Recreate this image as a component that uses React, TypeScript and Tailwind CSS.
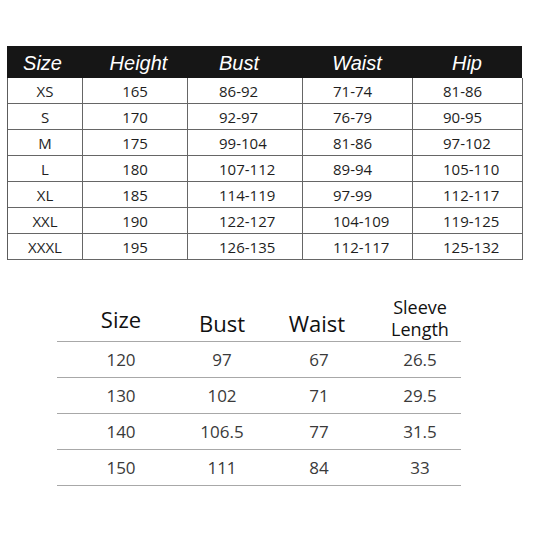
const TOP_HEAD = ["Size", "Height", "Bust", "Waist", "Hip"];

const TOP_ROWS = [
  ["XS", "165", "86-92", "71-74", "81-86"],
  ["S", "170", "92-97", "76-79", "90-95"],
  ["M", "175", "99-104", "81-86", "97-102"],
  ["L", "180", "107-112", "89-94", "105-110"],
  ["XL", "185", "114-119", "97-99", "112-117"],
  ["XXL", "190", "122-127", "104-109", "119-125"],
  ["XXXL", "195", "126-135", "112-117", "125-132"],
];

const KID_ROWS = [
  ["120", "97", "67", "26.5"],
  ["130", "102", "71", "29.5"],
  ["140", "106.5", "77", "31.5"],
  ["150", "111", "84", "33"],
];

const COLS = "grid grid-cols-[75px_105px_115px_110px_110px]";
const KID_COLS = "grid grid-cols-[128px_74px_120px_82px]";

// first two columns centred, the measurement columns sit flush left
const cellAlign = (i: number) =>
  i < 2 ? "justify-center" : i === 2 ? "justify-start pl-[31px]" : "justify-start pl-[30px]";

export default function App() {
  return (
    <div className="h-[533px] w-[533px] overflow-hidden bg-white pt-[46px]">
      <div className="ml-[7px] w-[515px] font-['Open_Sans',sans-serif]">
        <div className={`${COLS} h-[32px] bg-[#161616]`}>
          {TOP_HEAD.map((h, i) => (
            <div
              key={h}
              className={`flex items-center pt-[2px] font-['Liberation_Sans',Arial,sans-serif] text-[20px] italic text-white ${
                i === 2 ? "justify-start pl-[32px]" : "justify-center"
              } ${i === 0 ? "pr-[4px]" : ""} ${i === 1 ? "pl-[8px]" : ""}`}
            >
              {h}
            </div>
          ))}
        </div>
        <div className="border-l border-[#5c5c5c]">
          {TOP_ROWS.map((row) => (
            <div key={row[0]} className={`${COLS} h-[26px]`}>
              {row.map((c, i) => (
                <div
                  key={i}
                  className={`flex items-center border-r border-b border-[#666] pt-[2px] text-[15px] leading-none text-[#1e1e1e] ${cellAlign(i)}`}
                >
                  {c}
                </div>
              ))}
            </div>
          ))}
        </div>
      </div>

      <div className="ml-[57px] mt-[29px] w-[404px] font-['Open_Sans',sans-serif]">
        <div className={`${KID_COLS} h-[53px] border-b border-[#a8a8a8] text-[#111]`}>
          <div className="flex items-end justify-center pb-[11px] text-[22px] leading-none">Size</div>
          <div className="flex items-end justify-center pb-[7px] text-[22px] leading-none">Bust</div>
          <div className="flex items-end justify-center pb-[7px] pr-[4px] text-[22px] leading-none">Waist</div>
          <div className="flex flex-col items-center justify-end pb-[1px] text-[18px] leading-[22px]">
            <span>Sleeve</span>
            <span>Length</span>
          </div>
        </div>
        {KID_ROWS.map((row) => (
          <div key={row[0]} className={`${KID_COLS} h-[36px] border-b border-[#a8a8a8]`}>
            {row.map((c, i) => (
              <div
                key={i}
                className="flex items-center justify-center text-[17px] leading-none text-[#3a3a3a]"
              >
                {c}
              </div>
            ))}
          </div>
        ))}
      </div>
    </div>
  );
}
